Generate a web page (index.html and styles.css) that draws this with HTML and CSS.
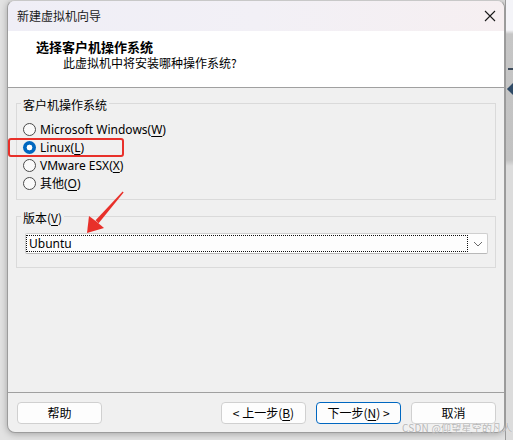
FILE: index.html
```html
<!DOCTYPE html>
<html lang="zh-CN">
<head>
<meta charset="utf-8">
<title>新建虚拟机向导</title>
<link rel="stylesheet" href="styles.css">
</head>
<body>
<div class="screen">
  <div class="window">
    <div class="titlebar">
      <span class="title">新建虚拟机向导</span>
      <svg class="close" width="12" height="12" viewBox="0 0 12 12"><path d="M1 1L11 11M11 1L1 11" stroke="#1a1a1a" stroke-width="1.1" fill="none"/></svg>
    </div>
    <div class="header">
      <div class="h-title">选择客户机操作系统</div>
      <div class="h-sub">此虚拟机中将安装哪种操作系统?</div>
    </div>
    <div class="content">
      <fieldset class="group group-os">
        <legend>客户机操作系统</legend>
        <div class="radio-row"><span class="radio"></span><span>Microsoft Windows(<u>W</u>)</span></div>
        <div class="radio-row marked"><span class="radio checked"></span><span>Linux(<u>L</u>)</span><span class="mark"></span></div>
        <div class="radio-row"><span class="radio"></span><span>VMware ESX(<u>X</u>)</span></div>
        <div class="radio-row"><span class="radio"></span><span>其他(<u>O</u>)</span></div>
      </fieldset>
      <fieldset class="group group-ver">
        <legend>版本(<u>V</u>)</legend>
        <div class="combo">
          <div class="combo-value">Ubuntu</div>
          <div class="combo-btn"><svg width="10" height="6" viewBox="0 0 10 6"><path d="M1 1L5 5L9 1" stroke="#6a6a6a" stroke-width="1" fill="none"/></svg></div>
        </div>
      </fieldset>
    </div>
    <div class="footer">
      <button class="btn">帮助</button>
      <button class="btn btn-back">&lt; 上一步(<u>B</u>)</button>
      <button class="btn btn-next">下一步(<u>N</u>) &gt;</button>
      <button class="btn">取消</button>
    </div>
  </div>
  <div class="side"><span class="side-dash"></span><span class="side-dia"></span></div>
  <svg class="arrow" width="513" height="440" viewBox="0 0 513 440">
    <polygon points="122.6,191.4 123.6,192.4 98.6,223.2 95.6,220.2" fill="#e8302a"/>
    <polygon points="87,233 89,216 97,222 104,228" fill="#e8302a"/>
  </svg>
  <div class="watermark">CSDN @仰望星空的凡人</div>
</div>
</body>
</html>
```
FILE: styles.css
```css
* { box-sizing: border-box; }
html, body { margin: 0; padding: 0; }
body {
  font-family: "Noto Sans", "Noto Sans CJK SC", sans-serif;
  font-size: 12px;
  color: #000;
  background: #e2e2e2;
}
.screen {
  position: relative;
  width: 513px;
  height: 440px;
  display: flex;
  overflow: hidden;
  background: #e2e2e2;
}
.window {
  margin-left: 7px;
  width: 498px;
  height: 433px;
  border: 1px solid #9c9c9c;
  border-top-color: #c8c8c8;
  border-radius: 8px;
  background: #f0f0f0;
  display: flex;
  flex-direction: column;
  overflow: hidden;
  box-shadow: 0 1px 7px rgba(0,0,0,0.28);
  flex: none;
}
.titlebar {
  height: 30px;
  flex: none;
  display: flex;
  align-items: center;
  justify-content: space-between;
  padding: 0 8px 0 9px;
  background: linear-gradient(90deg, #efeef6 0%, #f2f0f6 50%, #f6eff1 100%);
  color: #1a1a1a;
  font-family: "Noto Sans CJK SC", sans-serif;
  font-size: 12px;
}
.title { line-height: 16px; }
.close { display: block; }
.header {
  flex: none;
  height: 57px;
  background: #fff;
  border-bottom: 1px solid #a0a0a0;
  padding: 8px 0 0 28px;
  font-family: "Noto Sans CJK SC", sans-serif;
}
.h-title {
  font-size: 13px;
  font-weight: bold;
  line-height: 16px;
}
.h-sub {
  padding-left: 27px;
  font-size: 12px;
  line-height: 16px;
}
.content {
  flex: 1;
  padding: 6px 8px 0 8px;
}
.group {
  margin: 0;
  border: 1px solid #dadada;
  min-width: 0;
}
.group legend {
  font-family: "Noto Sans CJK SC", sans-serif;
  font-size: 12px;
  line-height: 14px;
  padding: 4px 2px 0 2px;
}
.group-os {
  padding: 8px 6px 7px 6px;
}
.group-os legend { margin-left: -2px; }
.group-ver {
  margin-top: 7px;
  padding: 8px 7px 13px 8px;
}
.group-ver legend { margin-left: -4px; }
.radio-row {
  position: relative;
  height: 18px;
  display: flex;
  align-items: center;
  gap: 4px;
  white-space: nowrap;
}
.radio {
  width: 13px;
  height: 13px;
  border-radius: 50%;
  border: 1px solid #4a4a4a;
  background: #fafafa;
  flex: none;
}
.radio.checked {
  border: none;
  background: radial-gradient(circle, #ffffff 0 2.6px, #0067c0 3.2px);
}
.mark {
  position: absolute;
  left: -15px;
  top: 0;
  width: 116px;
  height: 19px;
  border: 2px solid #e8302a;
  border-radius: 3px;
}
u { text-decoration: underline; text-underline-offset: 2px; }
.combo {
  height: 21px;
  border: 1px solid #cfcfcf;
  border-bottom-color: #b8b8b8;
  background: #fdfdfd;
  border-radius: 2px;
  padding: 1px 0 1px 0;
  display: flex;
}
.combo-value {
  flex: 1;
  border: 1px dotted #111;
  padding-left: 2px;
  line-height: 15px;
  font-size: 12px;
}
.combo-btn {
  width: 19px;
  flex: none;
  display: flex;
  align-items: center;
  justify-content: center;
}
.footer {
  flex: none;
  border-top: 1px solid #a0a0a0;
  padding: 9px 8px 8px 9px;
  display: flex;
  gap: 10px;
}
.btn {
  width: 85px;
  height: 22px;
  border: 1px solid #d0d0d0;
  border-radius: 4px;
  background: #fdfdfd;
  font-family: "Noto Sans CJK SC", sans-serif;
  font-size: 12px;
  color: #000;
  padding: 0;
  line-height: 18px;
}
.btn-back { margin-left: auto; }
.btn-next { border-color: #0067c0; }
.side {
  flex: 1;
  position: relative;
  background: linear-gradient(180deg, #f4f4f8 0 30px, #c6c6c6 34px, #c2c2c2 160px, #dcdcdc 166px, #dcdcdc 100%);
  border-left: 1px solid #9a9a9a;
  overflow: hidden;
}
.side-dash {
  position: absolute;
  left: 2px;
  top: 68px;
  width: 8px;
  height: 2px;
  background: #3c4a5a;
}
.side-dia {
  position: absolute;
  left: 3px;
  top: 84px;
  width: 10px;
  height: 10px;
  background: #2f4a66;
  transform: rotate(45deg);
}
.arrow {
  position: absolute;
  left: 0;
  top: 0;
  pointer-events: none;
}
.watermark {
  position: absolute;
  left: 402px;
  top: 421px;
  font-family: "Noto Sans CJK SC", sans-serif;
  font-size: 10px;
  line-height: 14px;
  letter-spacing: 0.2px;
  color: rgba(170,170,170,0.85);
  white-space: nowrap;
  text-shadow: 0 0 1px rgba(255,255,255,0.8);
}
```
